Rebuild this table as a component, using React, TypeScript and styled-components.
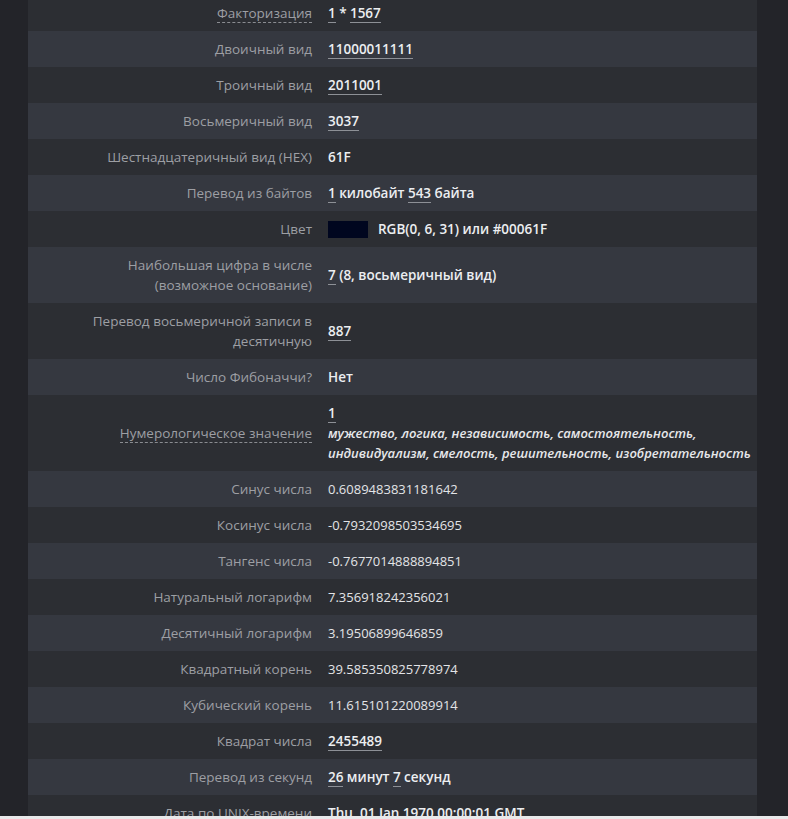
import React from "react";
import styled, { createGlobalStyle } from "styled-components";

const Global = createGlobalStyle`
  html, body { margin: 0; padding: 0; height: 100%; overflow: hidden; }
  body { background: #232429; font-family: "Open Sans", "Noto Sans", sans-serif; }
`;

const Page = styled.div`
  height: 100vh;
  display: flex;
  flex-direction: column;
`;

const Viewport = styled.div`
  flex: 1;
  overflow: hidden;
  display: flex;
  justify-content: flex-start;
  padding-left: 28px;
`;

const Panel = styled.div`
  width: 729px;
  margin-top: -5px;
  display: flex;
  flex-direction: column;
`;

const Row = styled.div<{ $alt: boolean }>`
  display: grid;
  grid-template-columns: 284px 1fr;
  column-gap: 16px;
  align-items: center;
  padding: 8px 0;
  background: ${(p) => (p.$alt ? "#353840" : "#2c2e33")};
  font-size: 13.5px;
  line-height: 20px;
`;

const Label = styled.div<{ $dotted?: boolean }>`
  text-align: right;
  color: #9d9fa4;
  span {
    border-bottom: ${(p) => (p.$dotted ? "1px dashed #8a8c91" : "none")};
  }
`;

const Value = styled.div`
  color: #e3e4e7;
  font-size: 13px;
`;

const B = styled.span`
  font-weight: 600;
  font-size: 13.5px;
  color: #eceef1;
`;

const U = styled.span`
  font-weight: 600;
  font-size: 13.5px;
  color: #eceef1;
  border-bottom: 1px solid #8d9096;
`;

const Swatch = styled.span`
  display: inline-block;
  width: 40px;
  height: 17px;
  background: #00061f;
  vertical-align: middle;
  margin-right: 10px;
  position: relative;
  top: -1px;
`;

const Italic = styled.div`
  font-style: italic;
  font-weight: 600;
  color: #e6e7ea;
`;

const BottomBar = styled.div`
  height: 3px;
  background: #e9e9ea;
`;

type Item = { label: React.ReactNode; value: React.ReactNode; dotted?: boolean };

const items: Item[] = [
  { label: "Факторизация", dotted: true, value: <><U>1</U> <B>*</B> <U>1567</U></> },
  { label: "Двоичный вид", value: <U>11000011111</U> },
  { label: "Троичный вид", value: <U>2011001</U> },
  { label: "Восьмеричный вид", value: <U>3037</U> },
  { label: "Шестнадцатеричный вид (HEX)", value: <B>61F</B> },
  { label: "Перевод из байтов", value: <><U>1</U> <B>килобайт</B> <U>543</U> <B>байта</B></> },
  { label: "Цвет", value: <><Swatch /><B>RGB(0, 6, 31) или #00061F</B></> },
  { label: <>Наибольшая цифра в числе<br />(возможное основание)</>, value: <><U>7</U> <B>(8, восьмеричный вид)</B></> },
  { label: <>Перевод восьмеричной записи в<br />десятичную</>, value: <U>887</U> },
  { label: "Число Фибоначчи?", value: <B>Нет</B> },
  {
    label: "Нумерологическое значение",
    dotted: true,
    value: (
      <>
        <div><U>1</U></div>
        <Italic>
          мужество, логика, независимость, самостоятельность,
          <br />
          индивидуализм, смелость, решительность, изобретательность
        </Italic>
      </>
    ),
  },
  { label: "Синус числа", value: "0.6089483831181642" },
  { label: "Косинус числа", value: "-0.7932098503534695" },
  { label: "Тангенс числа", value: "-0.7677014888894851" },
  { label: "Натуральный логарифм", value: "7.356918242356021" },
  { label: "Десятичный логарифм", value: "3.19506899646859" },
  { label: "Квадратный корень", value: "39.585350825778974" },
  { label: "Кубический корень", value: "11.615101220089914" },
  { label: "Квадрат числа", value: <U>2455489</U> },
  { label: "Перевод из секунд", value: <><U>26</U> <B>минут</B> <U>7</U> <B>секунд</B></> },
  { label: "Дата по UNIX-времени", value: <B>Thu, 01 Jan 1970 00:00:01 GMT</B> },
  { label: "Юлианский день", value: "2440587.5" },
];

export default function App() {
  return (
    <Page>
      <Global />
      <Viewport>
        <Panel>
          {items.map((it, i) => (
            <Row key={i} $alt={i % 2 === 1}>
              <Label $dotted={it.dotted}>
                <span>{it.label}</span>
              </Label>
              <Value>{it.value}</Value>
            </Row>
          ))}
        </Panel>
      </Viewport>
      <BottomBar />
    </Page>
  );
}
